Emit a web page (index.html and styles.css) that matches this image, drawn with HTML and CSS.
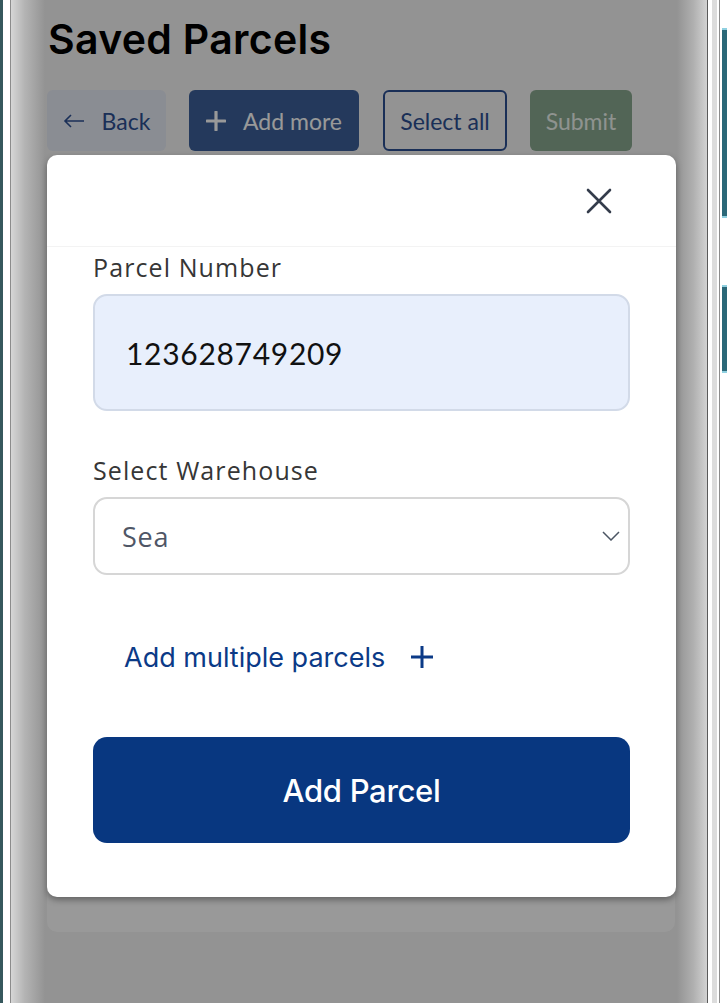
FILE: index.html
```html
<!DOCTYPE html>
<html lang="en">
<head>
  <meta charset="UTF-8">
  <title>Saved Parcels</title>
  <link rel="stylesheet" href="styles.css">
</head>
<body>
<div class="window">
  <div class="edge edge-left">
    <span class="rail"></span>
    <span class="gap"></span>
    <span class="line"></span>
    <span class="shade"></span>
  </div>

  <div class="screen">
    <h1 class="title">Saved Parcels</h1>

    <div class="actions">
      <button class="btn btn-back">
        <svg width="22" height="14" viewBox="0 0 22 14"><path d="M21 7H2M8 1L2 7l6 6" fill="none" stroke="currentColor" stroke-width="1.6"/></svg>
        Back
      </button>
      <button class="btn btn-add">
        <svg width="20" height="20" viewBox="0 0 20 20"><path d="M10 1v18M1 10h18" stroke="currentColor" stroke-width="3.2" stroke-linecap="round"/></svg>
        Add more
      </button>
      <button class="btn btn-select">Select all</button>
      <button class="btn btn-submit">Submit</button>
    </div>

    <div class="parcel-list"></div>

    <div class="overlay"></div>

    <div class="modal">
      <div class="modal-head">
        <button class="close">
          <svg width="26" height="26" viewBox="0 0 26 26"><path d="M2 2l22 22M24 2L2 24" stroke="currentColor" stroke-width="2.6" stroke-linecap="round"/></svg>
        </button>
      </div>

      <div class="modal-body">
        <label class="field-label">Parcel Number</label>
        <div class="input">123628749209</div>

        <label class="field-label label-gap">Select Warehouse</label>
        <div class="select">
          <span>Sea</span>
          <svg width="18" height="10" viewBox="0 0 18 10"><path d="M1 1l8 8 8-8" fill="none" stroke="currentColor" stroke-width="1.5"/></svg>
        </div>

        <div class="multi">
          <span>Add multiple parcels</span>
          <svg width="22" height="22" viewBox="0 0 22 22"><path d="M11 0v22M0 11h22" stroke="currentColor" stroke-width="3"/></svg>
        </div>

        <button class="submit-parcel">Add Parcel</button>
      </div>
    </div>
  </div>

  <div class="edge edge-right">
    <span class="shade"></span>
    <span class="line dark"></span>
    <span class="gap"></span>
    <span class="band"></span>
    <span class="gap thin"></span>
    <span class="line"></span>
    <span class="gap thin"></span>
    <span class="tabs">
      <i class="tab tab-1"></i>
      <i class="tab tab-2"></i>
    </span>
  </div>
</div>
</body>
</html>
```

FILE: styles.css
```css
* {
  box-sizing: border-box;
}

html, body {
  margin: 0;
  height: 100%;
  background: #ffffff;
}

.window {
  display: flex;
  height: 1003px;
  overflow: hidden;
  font-family: "Lato", "Noto Sans", sans-serif;
}

/* frame edges */
.edge {
  display: flex;
  flex-shrink: 0;
}

.edge span {
  display: block;
  height: 100%;
}

.edge-left .rail {
  width: 3px;
  background: #36585d;
}

.edge .gap {
  width: 7px;
  background: #ffffff;
}

.edge .gap.thin {
  width: 2px;
}

.edge .line {
  width: 1px;
  background: #8c8c8c;
}

.edge .line.dark {
  background: #5a5a5a;
}

.edge-left .shade {
  width: 34px;
  background: linear-gradient(to right, #d6d6d6, #b4b4b4 40%, #939393);
}

.edge-right .shade {
  width: 30px;
  background: linear-gradient(to right, #939393, #b0b0b0 55%, #d2d2d2);
}

.edge-right .gap {
  width: 4px;
}

.edge-right .band {
  width: 5px;
  background: #dcdcdc;
}

.edge-right .tabs {
  width: 5px;
  position: relative;
}

.tab {
  position: absolute;
  left: 0;
  width: 5px;
  background: #2b6878;
  border-top: 2px solid #8fd0e0;
  border-bottom: 2px solid #8fd0e0;
}

.tab-1 {
  top: 28px;
  height: 190px;
}

.tab-2 {
  top: 285px;
  height: 88px;
}

/* page under the modal */
.screen {
  position: relative;
  flex: 1;
  background: #f5f5f5;
  padding: 14px 2px 0;
}

.title {
  margin: 0 0 0 1px;
  font-family: "Inter", sans-serif;
  font-size: 41px;
  line-height: 50px;
  font-weight: 600;
  color: #000000;
  letter-spacing: 0.3px;
}

.actions {
  display: flex;
  gap: 23px;
  margin-top: 26px;
}

.btn {
  height: 61px;
  border: none;
  border-radius: 6px;
  font-family: "Lato", sans-serif;
  font-size: 23px;
  display: flex;
  align-items: center;
  justify-content: center;
  gap: 17px;
  padding: 0;
}

.btn-back {
  width: 119px;
  background: #e6ebf5;
  color: #2c4f92;
}

.btn-add {
  width: 170px;
  background: #3c5f99;
  color: #ffffff;
}

.btn-select {
  width: 124px;
  background: #f5f5f5;
  border: 2px solid #2c4f92;
  color: #2c4f92;
  margin-left: 1px;
}

.btn-submit {
  width: 102px;
  background: #89a88f;
  color: #eef5ef;
}

.parcel-list {
  height: 757px;
  margin-top: 24px;
  background: #ffffff;
  border-radius: 10px;
}

.overlay {
  position: absolute;
  inset: 0;
  background: rgba(0, 0, 0, 0.4);
}

/* modal */
.modal {
  position: absolute;
  top: 155px;
  left: 2px;
  right: 1px;
  background: #ffffff;
  border-radius: 10px;
  box-shadow: 0 3px 6px rgba(0, 0, 0, 0.35);
}

.modal-head {
  height: 92px;
  border-bottom: 1px solid #f3f3f3;
  display: flex;
  justify-content: flex-end;
  align-items: center;
  padding-right: 64px;
}

.close {
  border: none;
  background: none;
  padding: 0;
  color: #343c4b;
  display: flex;
}

.modal-body {
  padding: 5px 46px 54px;
}

.field-label {
  display: block;
  font-family: "Open Sans", sans-serif;
  font-size: 25px;
  line-height: 30px;
  letter-spacing: 1.1px;
  color: #363636;
  margin-bottom: 12px;
}

.label-gap {
  margin-top: 44px;
}

.input {
  height: 117px;
  background: #e8effc;
  border: 2px solid #d2dae8;
  border-radius: 14px;
  padding-left: 31px;
  display: flex;
  align-items: center;
  font-size: 30px;
  letter-spacing: 0.7px;
  color: #111111;
}

.select {
  height: 78px;
  border: 2px solid #d6d6d6;
  border-radius: 14px;
  padding: 0 8px 0 27px;
  display: flex;
  align-items: center;
  justify-content: space-between;
  font-family: "Open Sans", sans-serif;
  font-size: 27px;
  letter-spacing: 0.8px;
  color: #4f5666;
}

.select svg {
  color: #4b5563;
}

.multi {
  display: flex;
  align-items: center;
  gap: 26px;
  height: 40px;
  margin: 62px 0 0 31px;
  font-family: "Inter", sans-serif;
  font-size: 27px;
  color: #0b3a87;
}

.submit-parcel {
  display: block;
  width: 100%;
  height: 106px;
  margin-top: 60px;
  border: none;
  border-radius: 14px;
  background: #083780;
  color: #ffffff;
  font-family: "Inter", sans-serif;
  font-size: 31px;
  font-weight: 500;
  letter-spacing: -0.3px;
}
```
